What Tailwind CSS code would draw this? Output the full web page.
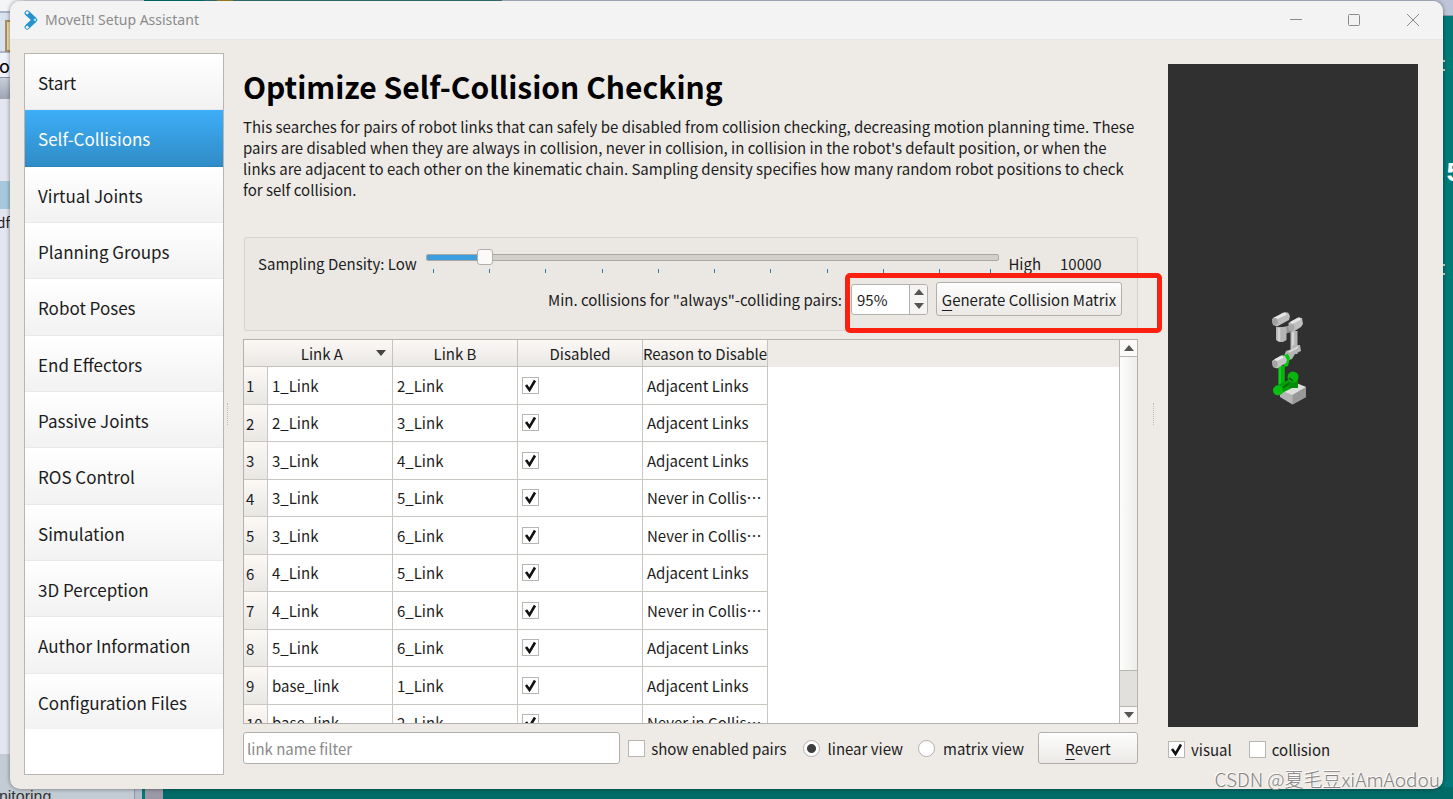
<!DOCTYPE html>
<html lang="en">
<head>
<meta charset="utf-8">
<title>MoveIt! Setup Assistant</title>
<script src="https://cdn.jsdelivr.net/npm/@tailwindcss/browser@4"></script>
</head>
<body class="relative h-screen overflow-hidden bg-[#007a78] font-['Noto_Sans_CJK_SC','Noto_Sans',sans-serif] text-[15px] leading-[21px] text-[#1c1c1c]">

<!-- desktop behind the window -->
<div class="absolute inset-0 overflow-hidden" aria-hidden="true">
  <div class="absolute inset-x-0 bottom-0 h-3 bg-[#006b67]"></div>
  <div class="absolute right-0 top-0 h-4 w-[1000px] border-b border-[#8f9aa8] bg-[#bcc6d8]"></div>
  <div class="absolute left-0 top-0 h-full w-[144px] bg-[#e3e6f1]"></div>
  <div class="absolute left-0 top-0 h-[11px] w-6 bg-[#f4f5f7]"></div>
  <div class="absolute left-0 top-[11px] h-[42px] w-6 border-y-2 border-[#a9b6c9] bg-[#d9e2ef]"></div>
  <div class="absolute left-[5px] top-5 h-8 w-5 border-2 border-[#b08d63] bg-[#e8dcae]"></div>
  <div class="absolute left-0 top-[53px] h-6 w-6 bg-[#eef2fa] text-right"><span class="absolute right-[14px] top-0 text-lg leading-6 text-black">uo</span></div>
  <div class="absolute left-0 top-[77px] h-[22px] w-6 border-t border-[#8c93a0] bg-linear-to-b from-[#c9cfda] to-[#9ea5b3]"></div>
  <div class="absolute left-0 top-[181px] h-7 w-6 bg-[#a5c8dc]"></div>
  <div class="absolute left-0 top-[212px] h-5 w-6"><span class="absolute right-[14px] top-0 text-sm leading-5">rdf</span></div>
  <div class="absolute bottom-0 left-0 h-[45px] w-[134px] bg-[#c3cbd4]"></div>
  <div class="absolute bottom-0 left-[134px] h-[12px] w-2 border-l border-[#8f98a6] bg-[#b4bcc9]"></div>
  <div class="absolute bottom-0 left-[142px] h-[12px] w-[3px] bg-[#007a78]"></div>
  <div class="absolute bottom-0 left-[145px] h-[12px] w-[18px] bg-[#9b99a5]"></div>
  <span class="absolute -bottom-[10px] left-[-10px] text-base leading-6 font-['Liberation_Sans',sans-serif] text-[#333]">onitoring</span>
  <div class="absolute left-[204px] top-0 h-[3px] w-[298px] bg-[#3c7f7e]"></div>
  <div class="absolute left-[217px] top-0 h-[2px] w-4 bg-[#b58f2e]"></div>
  <span class="absolute right-0 top-[160px] w-[7px] overflow-hidden font-['Liberation_Mono',monospace] text-[28px] leading-7 font-bold text-white">5</span>
  <div class="absolute right-[8px] top-[60px] h-[2px] w-[3px] bg-[#d5dfcf]"></div>
  <div class="absolute right-[8px] top-[69px] h-[2px] w-[3px] bg-[#d5dfcf]"></div>
  <div class="absolute right-[8px] top-[264px] h-[2px] w-[3px] bg-[#d5dfcf]"></div>
  <div class="absolute right-[8px] top-[273px] h-[2px] w-[3px] bg-[#d5dfcf]"></div>
</div>

<div class="relative h-full px-[10px] pt-px pb-[10px]">
<div class="flex h-full flex-col overflow-hidden rounded-[10px] bg-[#eeebe7] shadow-[0_0_4px_rgba(0,0,0,0.45)]">

  <header class="flex h-[39px] shrink-0 items-center border-b border-[#e8e6e3] bg-[#f3f3f3] pl-[14px]">
    <svg class="h-5 w-[14px] shrink-0" viewBox="0 0 14 20" fill="none" aria-hidden="true">
      <path d="M3.200 3 10.600 9.800 3.200 17" stroke="#2593cf" stroke-width="5.200" stroke-linecap="round" stroke-linejoin="round"/>
      <circle cx="3.200" cy="2.800" r="1.500" fill="#f3f3f3"/><circle cx="11" cy="9.800" r="1.300" fill="#b9e0f4"/><circle cx="3.200" cy="17.200" r="1.500" fill="#f3f3f3"/>
    </svg>
    <span class="ml-[7px] grow font-['Noto_Sans',sans-serif] text-sm text-[#8b8b8b]">MoveIt! Setup Assistant</span>
    <button class="flex h-full w-[58px] items-center justify-center" aria-label="Minimize"><svg class="size-3" viewBox="0 0 12 12" stroke="#8a8a8a"><path d="M0 5.500h12"/></svg></button>
    <button class="flex h-full w-[58px] items-center justify-center" aria-label="Maximize"><svg class="size-3" viewBox="0 0 12 12" stroke="#8a8a8a" fill="none"><rect x=".5" y=".5" width="11" height="11" rx="1"/></svg></button>
    <button class="flex h-full w-[60px] items-center justify-center" aria-label="Close"><svg class="size-3" viewBox="0 0 12 12" stroke="#8a8a8a"><path d="M0 0 12 12M12 0 0 12"/></svg></button>
  </header>

  <div class="flex min-h-0 grow pt-[13px] pr-[25px] pb-[14px] pl-[14px]">

    <nav class="w-[200px] shrink-0 border border-[#b9b6b2] bg-white text-[17px]" aria-label="Setup steps">
      <div class="flex h-[675px] flex-col">
        <a href="#" class="flex flex-1 items-center border-b border-[#ebe9e6] bg-linear-to-b from-white to-[#f2f2f2] pt-[2px] pl-[13px]">Start</a>
        <a href="#" aria-current="page" class="flex flex-1 items-center border-b border-[#2f83bb] bg-linear-to-b from-[#3daef8] to-[#308cc6] pt-[2px] pl-[13px] text-white">Self-Collisions</a>
        <a href="#" class="flex flex-1 items-center border-b border-[#ebe9e6] bg-linear-to-b from-white to-[#f2f2f2] pt-[2px] pl-[13px]">Virtual Joints</a>
        <a href="#" class="flex flex-1 items-center border-b border-[#ebe9e6] bg-linear-to-b from-white to-[#f2f2f2] pt-[2px] pl-[13px]">Planning Groups</a>
        <a href="#" class="flex flex-1 items-center border-b border-[#ebe9e6] bg-linear-to-b from-white to-[#f2f2f2] pt-[2px] pl-[13px]">Robot Poses</a>
        <a href="#" class="flex flex-1 items-center border-b border-[#ebe9e6] bg-linear-to-b from-white to-[#f2f2f2] pt-[2px] pl-[13px]">End Effectors</a>
        <a href="#" class="flex flex-1 items-center border-b border-[#ebe9e6] bg-linear-to-b from-white to-[#f2f2f2] pt-[2px] pl-[13px]">Passive Joints</a>
        <a href="#" class="flex flex-1 items-center border-b border-[#ebe9e6] bg-linear-to-b from-white to-[#f2f2f2] pt-[2px] pl-[13px]">ROS Control</a>
        <a href="#" class="flex flex-1 items-center border-b border-[#ebe9e6] bg-linear-to-b from-white to-[#f2f2f2] pt-[2px] pl-[13px]">Simulation</a>
        <a href="#" class="flex flex-1 items-center border-b border-[#ebe9e6] bg-linear-to-b from-white to-[#f2f2f2] pt-[2px] pl-[13px]">3D Perception</a>
        <a href="#" class="flex flex-1 items-center border-b border-[#ebe9e6] bg-linear-to-b from-white to-[#f2f2f2] pt-[2px] pl-[13px]">Author Information</a>
        <a href="#" class="flex flex-1 items-center bg-linear-to-b from-white to-[#f2f2f2] pt-[2px] pl-[13px]">Configuration Files</a>
      </div>
    </nav>

    <div class="flex w-[19px] shrink-0 items-center pl-[3px]"><span class="h-[22px] border-l border-dotted border-[#bdbab6]"></span></div>

    <main class="flex min-w-0 grow flex-col pt-[11px] pb-[11px]">
      <h1 class="text-[30px] leading-[44px] font-bold text-black">Optimize Self-Collision Checking</h1>
      <p class="mt-2 h-[84px] shrink-0">This searches for pairs of robot links that can safely be disabled from collision checking, decreasing motion planning time. These pairs are disabled when they are always in collision, never in collision, in collision in the robot's default position, or when the links are adjacent to each other on the kinematic chain. Sampling density specifies how many random robot positions to check for self collision.</p>

      <section class="mt-[37px] ml-px h-[94px] shrink-0 rounded-xs border border-[#d5d2ce] bg-[#ebe8e4] pt-[10px] pr-[15px] pl-[13px]">
        <div class="flex h-[30px] items-center">
          <label for="density" class="whitespace-nowrap">Sampling Density: Low</label>
          <div class="mx-[9px] flex grow flex-col self-start">
            <input id="density" type="range" min="0" max="100" value="9" class="block h-[18px] w-full appearance-none bg-transparent [&::-webkit-slider-runnable-track]:h-[7px] [&::-webkit-slider-runnable-track]:rounded-xs [&::-webkit-slider-runnable-track]:border [&::-webkit-slider-runnable-track]:border-[#aaa7a3] [&::-webkit-slider-runnable-track]:bg-linear-to-r [&::-webkit-slider-runnable-track]:from-[#3a9ee0] [&::-webkit-slider-runnable-track]:from-10% [&::-webkit-slider-runnable-track]:to-[#d3d0cc] [&::-webkit-slider-runnable-track]:to-10% [&::-webkit-slider-thumb]:-mt-[6px] [&::-webkit-slider-thumb]:size-4 [&::-webkit-slider-thumb]:appearance-none [&::-webkit-slider-thumb]:rounded-[3px] [&::-webkit-slider-thumb]:border [&::-webkit-slider-thumb]:border-[#b3b0ac] [&::-webkit-slider-thumb]:bg-[#fbfaf9]">
            <div class="mt-[3px] mr-2 ml-[7px] flex h-1 *:border-l *:border-[#2c7cb0]" aria-hidden="true">
              <i class="flex-[56]"></i><i class="flex-[56]"></i><i class="flex-[56]"></i><i class="flex-[56]"></i><i class="flex-[56]"></i><i class="flex-[56]"></i><i class="flex-[56]"></i><i class="flex-[56]"></i><i class="flex-[56]"></i><i class="flex-[51] border-r"></i>
            </div>
          </div>
          <span>High</span><output for="density" class="ml-[19px] w-[62px]">10000</output>
        </div>
        <div class="mt-[4px] flex h-[34px] items-center justify-end">
          <label for="mincol">Min. collisions for "always"-colliding pairs:</label>
          <div class="ml-[9px] flex h-[31px] w-[77px] overflow-hidden rounded-[3px] border border-[#b3b0ac] bg-white">
            <input id="mincol" type="text" value="95%" class="min-w-0 grow pl-[5px] outline-none">
            <div class="flex w-[18px] shrink-0 flex-col border-l border-[#b3b0ac] bg-[#f5f4f2]">
              <button class="flex flex-1 items-center justify-center" aria-label="Increase"><svg class="h-[6px] w-[10px]" viewBox="0 0 10 6" fill="#555"><path d="M5 0 10 6H0z"/></svg></button>
              <button class="flex flex-1 items-center justify-center" aria-label="Decrease"><svg class="h-[6px] w-[10px]" viewBox="0 0 10 6" fill="#555"><path d="M5 6 10 0H0z"/></svg></button>
            </div>
          </div>
          <button class="ml-2 h-[34px] w-[186px] rounded-[3px] border border-[#b3b0ac] bg-linear-to-b from-[#fefefe] to-[#ebe9e6] whitespace-nowrap"><u class="underline-offset-4">G</u>enerate Collision Matrix</button>
        </div>
      </section>

      <div class="mt-2 flex min-h-0 grow border border-[#b5b2ae] bg-white">
        <div class="min-w-0 grow overflow-hidden bg-linear-to-b from-[#eeebe7] from-[27px] to-white to-[27px]">
          <table class="w-[524px] table-fixed border-separate border-spacing-0 whitespace-nowrap">
            <colgroup><col class="w-6"><col class="w-[125px]"><col class="w-[125px]"><col class="w-[125px]"><col class="w-[125px]"></colgroup>
            <thead>
              <tr class="h-[27px] bg-linear-to-b from-[#fbf8f5] to-[#e9e7e4] *:overflow-hidden *:border-r *:border-b *:border-[#c6c3bf] *:p-0 *:font-normal">
                <th colspan="2"><div class="flex items-center justify-end"><span class="mr-[33px]">Link A</span><svg class="mr-[6px] h-[6px] w-[10px]" viewBox="0 0 10 6" fill="#444"><path d="M5 6 10 0H0z"/></svg></div></th>
                <th>Link B</th><th>Disabled</th><th><div class="flex justify-center">Reason to Disable</div></th>
              </tr>
            </thead>
            <tbody id="pairs"></tbody>
          </table>
        </div>
        <div class="flex w-[18px] shrink-0 flex-col border-l border-[#b9b6b2] bg-[#e2e0dd]" aria-hidden="true">
          <div class="flex h-[17px] items-center justify-center border-b border-[#b9b6b2] bg-[#fbfaf9]"><svg class="h-[6px] w-[10px]" viewBox="0 0 10 6" fill="#555"><path d="M5 0 10 6H0z"/></svg></div>
          <div class="grow border-b border-[#b9b6b2] bg-linear-to-r from-[#fdfdfc] to-[#ededeb]"></div>
          <div class="h-[35px]"></div>
          <div class="flex h-[17px] items-center justify-center border-t border-[#b9b6b2] bg-[#fbfaf9]"><svg class="h-[6px] w-[10px]" viewBox="0 0 10 6" fill="#555"><path d="M5 6 10 0H0z"/></svg></div>
        </div>
      </div>

      <div class="mt-2 flex h-8 shrink-0 items-center whitespace-nowrap">
        <input type="text" aria-label="link name filter" placeholder="link name filter" class="h-full min-w-0 grow rounded-[3px] border border-[#b3b0ac] bg-white pl-[3px] placeholder-[#8a8a8a]">
        <input id="enabled" type="checkbox" class="ml-2 size-[17px] shrink-0 appearance-none border border-[#b9b6b2] bg-white">
        <label for="enabled" class="ml-[6px]">show enabled pairs</label>
        <input id="linear" name="view" type="radio" checked class="ml-4 size-[17px] shrink-0 appearance-none rounded-full border border-[#b3b0ac] bg-white checked:bg-radial checked:from-[#3f3f3f] checked:from-[4px] checked:to-white checked:to-[5px]">
        <label for="linear" class="ml-2">linear view</label>
        <input id="matrix" name="view" type="radio" class="ml-[15px] size-[17px] shrink-0 appearance-none rounded-full border border-[#b3b0ac] bg-white">
        <label for="matrix" class="ml-2">matrix view</label>
        <button class="ml-[14px] h-full w-[100px] rounded-[3px] border border-[#b3b0ac] bg-linear-to-b from-[#fefefe] to-[#ebe9e6]"><u class="underline-offset-4">R</u>evert</button>
      </div>
    </main>

    <div class="flex w-[30px] shrink-0 items-center justify-center"><span class="h-[22px] border-l border-dotted border-[#bdbab6]"></span></div>

    <aside class="flex w-[250px] shrink-0 flex-col pt-[11px] pb-[15px]">
      <div class="relative grow bg-[#303030]">
        <svg class="absolute top-[236px] left-[97px] h-[120px] w-[48px]" viewBox="1265 300 48 120" role="img" aria-label="Robot model">
          <path d="M1280 390 1293 385 1306 387V397L1292.500 404.500 1280 397z" fill="#b4b4b4"/>
          <path d="M1280 390 1294 382 1306 387 1292.500 395z" fill="#dedede"/>
          <path d="M1292.500 395 1306 387V397L1292.500 404.500z" fill="#989898"/>
          <path d="M1294 331V354" stroke="#b4b4b4" stroke-width="7"/><path d="M1293 332V350" stroke="#d6d6d6" stroke-width="2.500"/>
          <path d="M1284 356 1286 351 1292 349 1293 345 1300 345 1301 351 1295 354 1292 359 1286 361z" fill="#b4b4b4"/><path d="M1289 352 1298 347" stroke="#dcdcdc" stroke-width="2"/>
          <path d="M1283 327 1291 325 1292 332 1284 334z" fill="#919191"/>
          <path d="M1276 327H1286.500V340L1283 342H1279L1276 340z" fill="#b4b4b4"/><path d="M1279 328V341" stroke="#d2d2d2" stroke-width="2.500"/>
          <path d="M1272 319 1283 312.500 1288 312.500 1290 316 1289 320 1277 326.500 1273 325z" fill="#bcbcbc"/><path d="M1274 319 1286 313.500" stroke="#e6e6e6" stroke-width="3"/>
          <path d="M1288.500 323 1298 317.500 1302 318 1303 324 1301 327 1293 332 1289 330z" fill="#c0c0c0"/><path d="M1291 323 1300 318.500" stroke="#e6e6e6" stroke-width="3"/>
          <ellipse cx="1275" cy="321.500" rx="2.800" ry="3.500" fill="#a0a0a0"/><ellipse cx="1291.500" cy="327.500" rx="3" ry="3.800" fill="#a8a8a8"/>
          <path d="M1281.500 366V389" stroke="#05b40d" stroke-width="6.500"/><path d="M1280 366V387" stroke="#18ca1d" stroke-width="2"/>
          <path d="M1278 390 1290 384" stroke="#039e0a" stroke-width="9" stroke-linecap="round"/>
          <path d="M1293.500 377V388" stroke="#068b0a" stroke-width="9"/><circle cx="1293" cy="377" r="5.500" fill="#08b610"/><circle cx="1278" cy="390.500" r="5" fill="#07bd10"/><path d="M1283 388 1289 383M1289 378 1293 381" stroke="#046a08" stroke-width="2"/>
          <path d="M1283 355 1288 354 1290 358 1288 366 1284 367z" fill="#05c90d"/>
          <path d="M1272 361 1281 355.500 1285 356 1287 360 1286 363 1277 368.500 1273 367z" fill="#c3c3c3"/><path d="M1275 360.500 1283 356.500" stroke="#e8e8e8" stroke-width="3"/><ellipse cx="1275" cy="364" rx="2.600" ry="3.400" fill="#a2a2a2"/>
        </svg>
      </div>
      <div class="mt-[12px] flex h-[21px] shrink-0 items-center">
        <span class="relative flex size-[17px]"><input id="visual" type="checkbox" checked class="size-[17px] appearance-none border border-[#b9b6b2] bg-white"><svg class="pointer-events-none absolute inset-0 size-full" viewBox="0 0 17 17" fill="none" stroke="#111" stroke-width="2.600"><path d="M4 8 7.500 12.800 13 3.500"/></svg></span>
        <label for="visual" class="ml-[6px]">visual</label>
        <input id="collision" type="checkbox" class="ml-[17px] size-[17px] appearance-none border border-[#b9b6b2] bg-white">
        <label for="collision" class="ml-[6px]">collision</label>
      </div>
    </aside>
  </div>
</div>
</div>

<!-- highlight frame around the generate controls -->
<div class="pointer-events-none absolute top-[273px] right-[291px] h-[60px] w-[317px] rounded-[5px] border-5 border-[#fc2010]"></div>

<div class="pointer-events-none absolute right-[13px] bottom-[6px] text-[19px] leading-7 font-light text-[#85827f] [text-shadow:-1px_-1px_0_#fff]">CSDN @夏毛豆xiAmAodou</div>

<script>
const rows = [
  ['1_Link', '2_Link', 'Adjacent Links'], ['2_Link', '3_Link', 'Adjacent Links'],
  ['3_Link', '4_Link', 'Adjacent Links'], ['3_Link', '5_Link', 'Never in Collis…'],
  ['3_Link', '6_Link', 'Never in Collis…'], ['4_Link', '5_Link', 'Adjacent Links'],
  ['4_Link', '6_Link', 'Never in Collis…'], ['5_Link', '6_Link', 'Adjacent Links'],
  ['base_link', '1_Link', 'Adjacent Links'], ['base_link', '2_Link', 'Never in Collis…']
];
// lang="zh-CN" selects the vertically centred ellipsis of the CJK font
document.getElementById('pairs').innerHTML = rows.map(([a, b, why], i) => `
  <tr class="h-[37px] odd:h-[38px] *:border-r *:border-b *:border-[#cac7c3] *:pt-0 *:pr-0">
    <th class="bg-linear-to-b from-[#fbf8f5] to-[#e9e7e4] pb-0 pl-[2px] text-left font-normal">${i + 1}</th>
    <td class="pb-px pl-1">${a}</td><td class="pb-px pl-1">${b}</td>
    <td class="pb-px pl-1"><span class="relative flex size-[17px]"><input type="checkbox" checked aria-label="Disable ${a} and ${b}" class="size-[17px] appearance-none border border-[#b9b6b2] bg-white"><svg class="pointer-events-none absolute inset-0 size-full" viewBox="0 0 17 17" fill="none" stroke="#111" stroke-width="2.600"><path d="M4 8 7.500 12.800 13 3.500"/></svg></span></td>
    <td class="pb-px pl-1" lang="zh-CN">${why}</td>
  </tr>`).join('');
</script>
</body>
</html>
